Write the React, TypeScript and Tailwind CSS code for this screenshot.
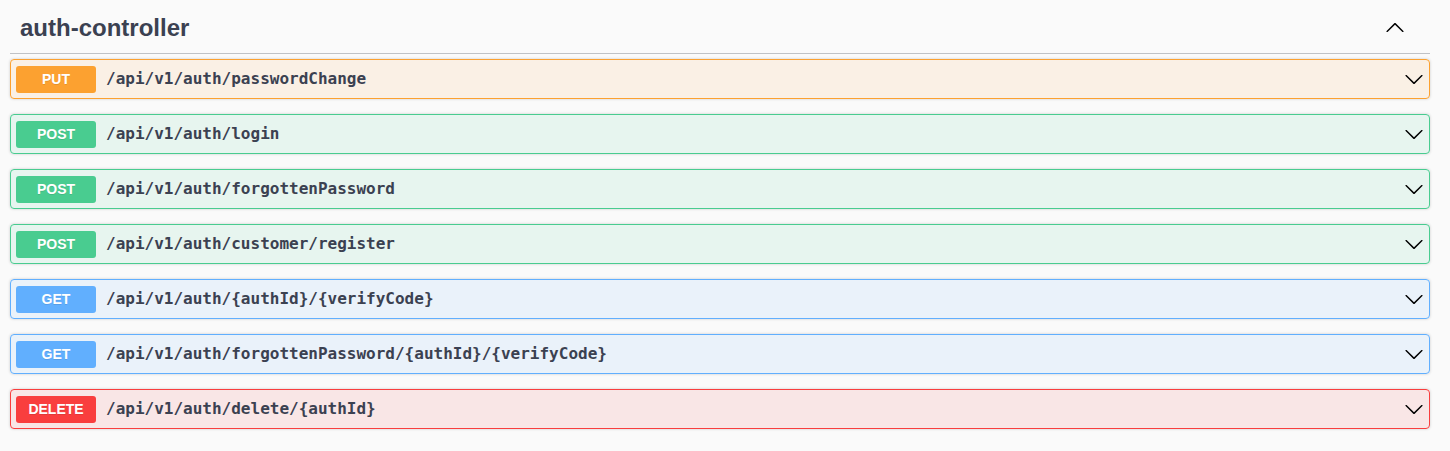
import React from 'react';

type Method = 'PUT' | 'POST' | 'GET' | 'DELETE';

const methodStyles: Record<Method, { block: string; badge: string }> = {
  PUT: { block: 'bg-[#fca130]/10 border-[#fca130]', badge: 'bg-[#fca130]' },
  POST: { block: 'bg-[#49cc90]/10 border-[#49cc90]', badge: 'bg-[#49cc90]' },
  GET: { block: 'bg-[#61affe]/10 border-[#61affe]', badge: 'bg-[#61affe]' },
  DELETE: { block: 'bg-[#f93e3e]/10 border-[#f93e3e]', badge: 'bg-[#f93e3e]' },
};

const operations: { method: Method; path: string }[] = [
  { method: 'PUT', path: '/api/v1/auth/passwordChange' },
  { method: 'POST', path: '/api/v1/auth/login' },
  { method: 'POST', path: '/api/v1/auth/forgottenPassword' },
  { method: 'POST', path: '/api/v1/auth/customer/register' },
  { method: 'GET', path: '/api/v1/auth/{authId}/{verifyCode}' },
  { method: 'GET', path: '/api/v1/auth/forgottenPassword/{authId}/{verifyCode}' },
  { method: 'DELETE', path: '/api/v1/auth/delete/{authId}' },
];

function Arrow({ up }: { up?: boolean }) {
  return (
    <svg width="20" height="20" viewBox="0 0 20 20" className={up ? 'rotate-180 shrink-0' : 'shrink-0'} fill="#000">
      <path d="M17.418 6.109c.272-.268.709-.268.979 0s.271.701 0 .969l-7.908 7.83c-.27.268-.707.268-.979 0l-7.908-7.83c-.27-.268-.27-.701 0-.969.271-.268.709-.268.979 0L10 13.25l7.418-7.141z" />
    </svg>
  );
}

export default function App() {
  return (
    <div className="min-h-[451px] bg-[#fafafa] pl-[10px] pr-[20px] font-['Liberation_Sans',Arial,sans-serif] text-[#3b4151]">
      <div className="flex items-center border-b border-[#3b4151]/30 pl-[10px] pr-[25px] pt-[11px] pb-[9px] mb-[5px]">
        <h3 className="flex-1 text-[24px] font-bold leading-[33px]">auth-controller</h3>
        <Arrow up />
      </div>

      {operations.map((op, i) => {
        const s = methodStyles[op.method];
        return (
          <div key={i} className={`mb-[15px] rounded-[4px] border shadow-[0_0_3px_rgba(0,0,0,0.19)] ${s.block}`}>
            <div className="flex h-[38px] items-center p-[5px]">
              <span
                className={`flex h-[27px] w-[80px] items-center justify-center rounded-[3px] text-[14px] font-bold text-white [text-shadow:0_1px_0_rgba(0,0,0,0.1)] ${s.badge}`}
              >
                {op.method}
              </span>
              <span className="flex-1 px-[10px] font-['DejaVu_Sans_Mono',monospace] text-[16px] font-bold text-[#3b4151]">
                {op.path}
              </span>
              <Arrow />
            </div>
          </div>
        );
      })}
    </div>
  );
}
